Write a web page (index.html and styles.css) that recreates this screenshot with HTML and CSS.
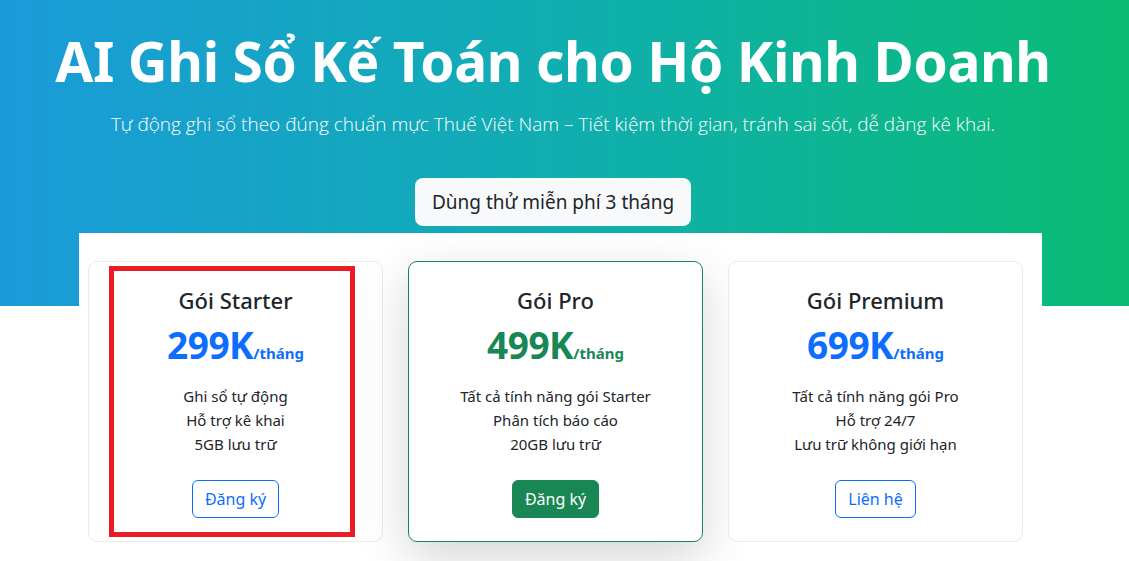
FILE: index.html
```html
<!DOCTYPE html>
<html lang="vi">
  <head>
    <meta charset="UTF-8" />
    <meta name="viewport" content="width=device-width, initial-scale=1.0" />
    <title>AI Ghi Sổ Kế Toán cho Hộ Kinh Doanh</title>
    <link rel="stylesheet" href="styles.css">
  </head>
  <body>
    <!-- Hero -->
    <section class="hero">
      <div class="hero-inner">
        <h1 class="hero-title">AI Ghi Sổ Kế Toán cho Hộ Kinh Doanh</h1>
        <p class="hero-lead">
          Tự động ghi sổ theo đúng chuẩn mực Thuế Việt Nam – Tiết kiệm thời gian, tránh sai sót, dễ dàng kê khai.
        </p>
        <a href="#" class="btn btn-light">Dùng thử miễn phí 3 tháng</a>
      </div>
    </section>

    <!-- Bảng giá -->
    <section class="pricing">
      <div class="pricing-box">
        <div class="plan">
          <h4 class="plan-name">Gói Starter</h4>
          <div class="plan-price price-blue">299K<span class="per">/tháng</span></div>
          <ul class="plan-features">
            <li>Ghi sổ tự động</li>
            <li>Hỗ trợ kê khai</li>
            <li>5GB lưu trữ</li>
          </ul>
          <a href="#" class="btn btn-sm-outline">Đăng ký</a>
          <div class="mark"></div>
        </div>

        <div class="plan plan-featured">
          <h4 class="plan-name">Gói Pro</h4>
          <div class="plan-price price-green">499K<span class="per">/tháng</span></div>
          <ul class="plan-features">
            <li>Tất cả tính năng gói Starter</li>
            <li>Phân tích báo cáo</li>
            <li>20GB lưu trữ</li>
          </ul>
          <a href="#" class="btn btn-success">Đăng ký</a>
        </div>

        <div class="plan">
          <h4 class="plan-name">Gói Premium</h4>
          <div class="plan-price price-blue">699K<span class="per">/tháng</span></div>
          <ul class="plan-features">
            <li>Tất cả tính năng gói Pro</li>
            <li>Hỗ trợ 24/7</li>
            <li>Lưu trữ không giới hạn</li>
          </ul>
          <a href="#" class="btn btn-sm-outline">Liên hệ</a>
        </div>
      </div>
    </section>
  </body>
</html>
```

FILE: styles.css
```css
body {
  margin: 0;
  font-family: "Noto Sans", "Open Sans", sans-serif;
  color: #212529;
  background: #fff;
}

.hero {
  background: linear-gradient(90deg, #1a9bd9 0%, #10aeb0 50%, #0abc74 100%);
  color: #fff;
  padding: 28px 0 80px;
}

.hero-inner {
  width: 1106px;
  text-align: center;
}

.hero-title {
  margin: 0;
  font-size: 55px;
  font-weight: 700;
  line-height: 66px;
  letter-spacing: -0.4px;
}

.hero-lead {
  margin: 16px 0 40px;
  font-family: "Open Sans", sans-serif;
  font-size: 19px;
  font-weight: 300;
  line-height: 28px;
}

.btn {
  display: inline-block;
  text-decoration: none;
  text-align: center;
  border: 1px solid transparent;
  font-size: 16px;
  line-height: 24px;
  padding: 6px 12px;
  border-radius: 6px;
}

.btn-light {
  background: #f8f9fa;
  color: #212529;
  font-size: 19px;
  line-height: 30px;
  padding: 8px 16px;
  border-radius: 8px;
}

.btn-sm-outline {
  color: #0d6efd;
  border-color: #0d6efd;
}

.btn-success {
  background: #198754;
  border-color: #198754;
  color: #fff;
}

.pricing {
  padding-bottom: 20px;
}

.pricing-box {
  width: 935px;
  margin: -73px 0 0 79px;
  padding: 28px 19px 0 9px;
  background: #fff;
  display: flex;
  gap: 25px;
}

.plan {
  position: relative;
  flex: 0 0 295px;
  box-sizing: border-box;
  height: 281px;
  padding: 24px;
  text-align: center;
  border: 1px solid #ebebeb;
  border-radius: 9px;
  background: #fff;
}

.plan-featured {
  border-color: #198754;
  box-shadow: 0 16px 48px rgba(0, 0, 0, 0.17);
}

.plan-name {
  margin: 0 0 8px;
  font-size: 22px;
  font-weight: 500;
  line-height: 28px;
}

.plan-price {
  font-size: 37px;
  font-weight: 700;
  line-height: 46px;
  margin-bottom: 16px;
  letter-spacing: -0.5px;
}

.plan-price .per {
  font-size: 15px;
  line-height: 1;
  letter-spacing: 0;
}

.price-blue {
  color: #0d6efd;
}

.price-green {
  color: #198754;
}

.plan-features {
  list-style: none;
  margin: 0 0 24px;
  padding: 0;
  font-size: 15px;
  line-height: 24px;
}

/* khung đỏ đánh dấu */
.mark {
  position: absolute;
  left: 20px;
  top: 4px;
  width: 236px;
  height: 261px;
  border: 5px solid #ea1c24;
}
```
